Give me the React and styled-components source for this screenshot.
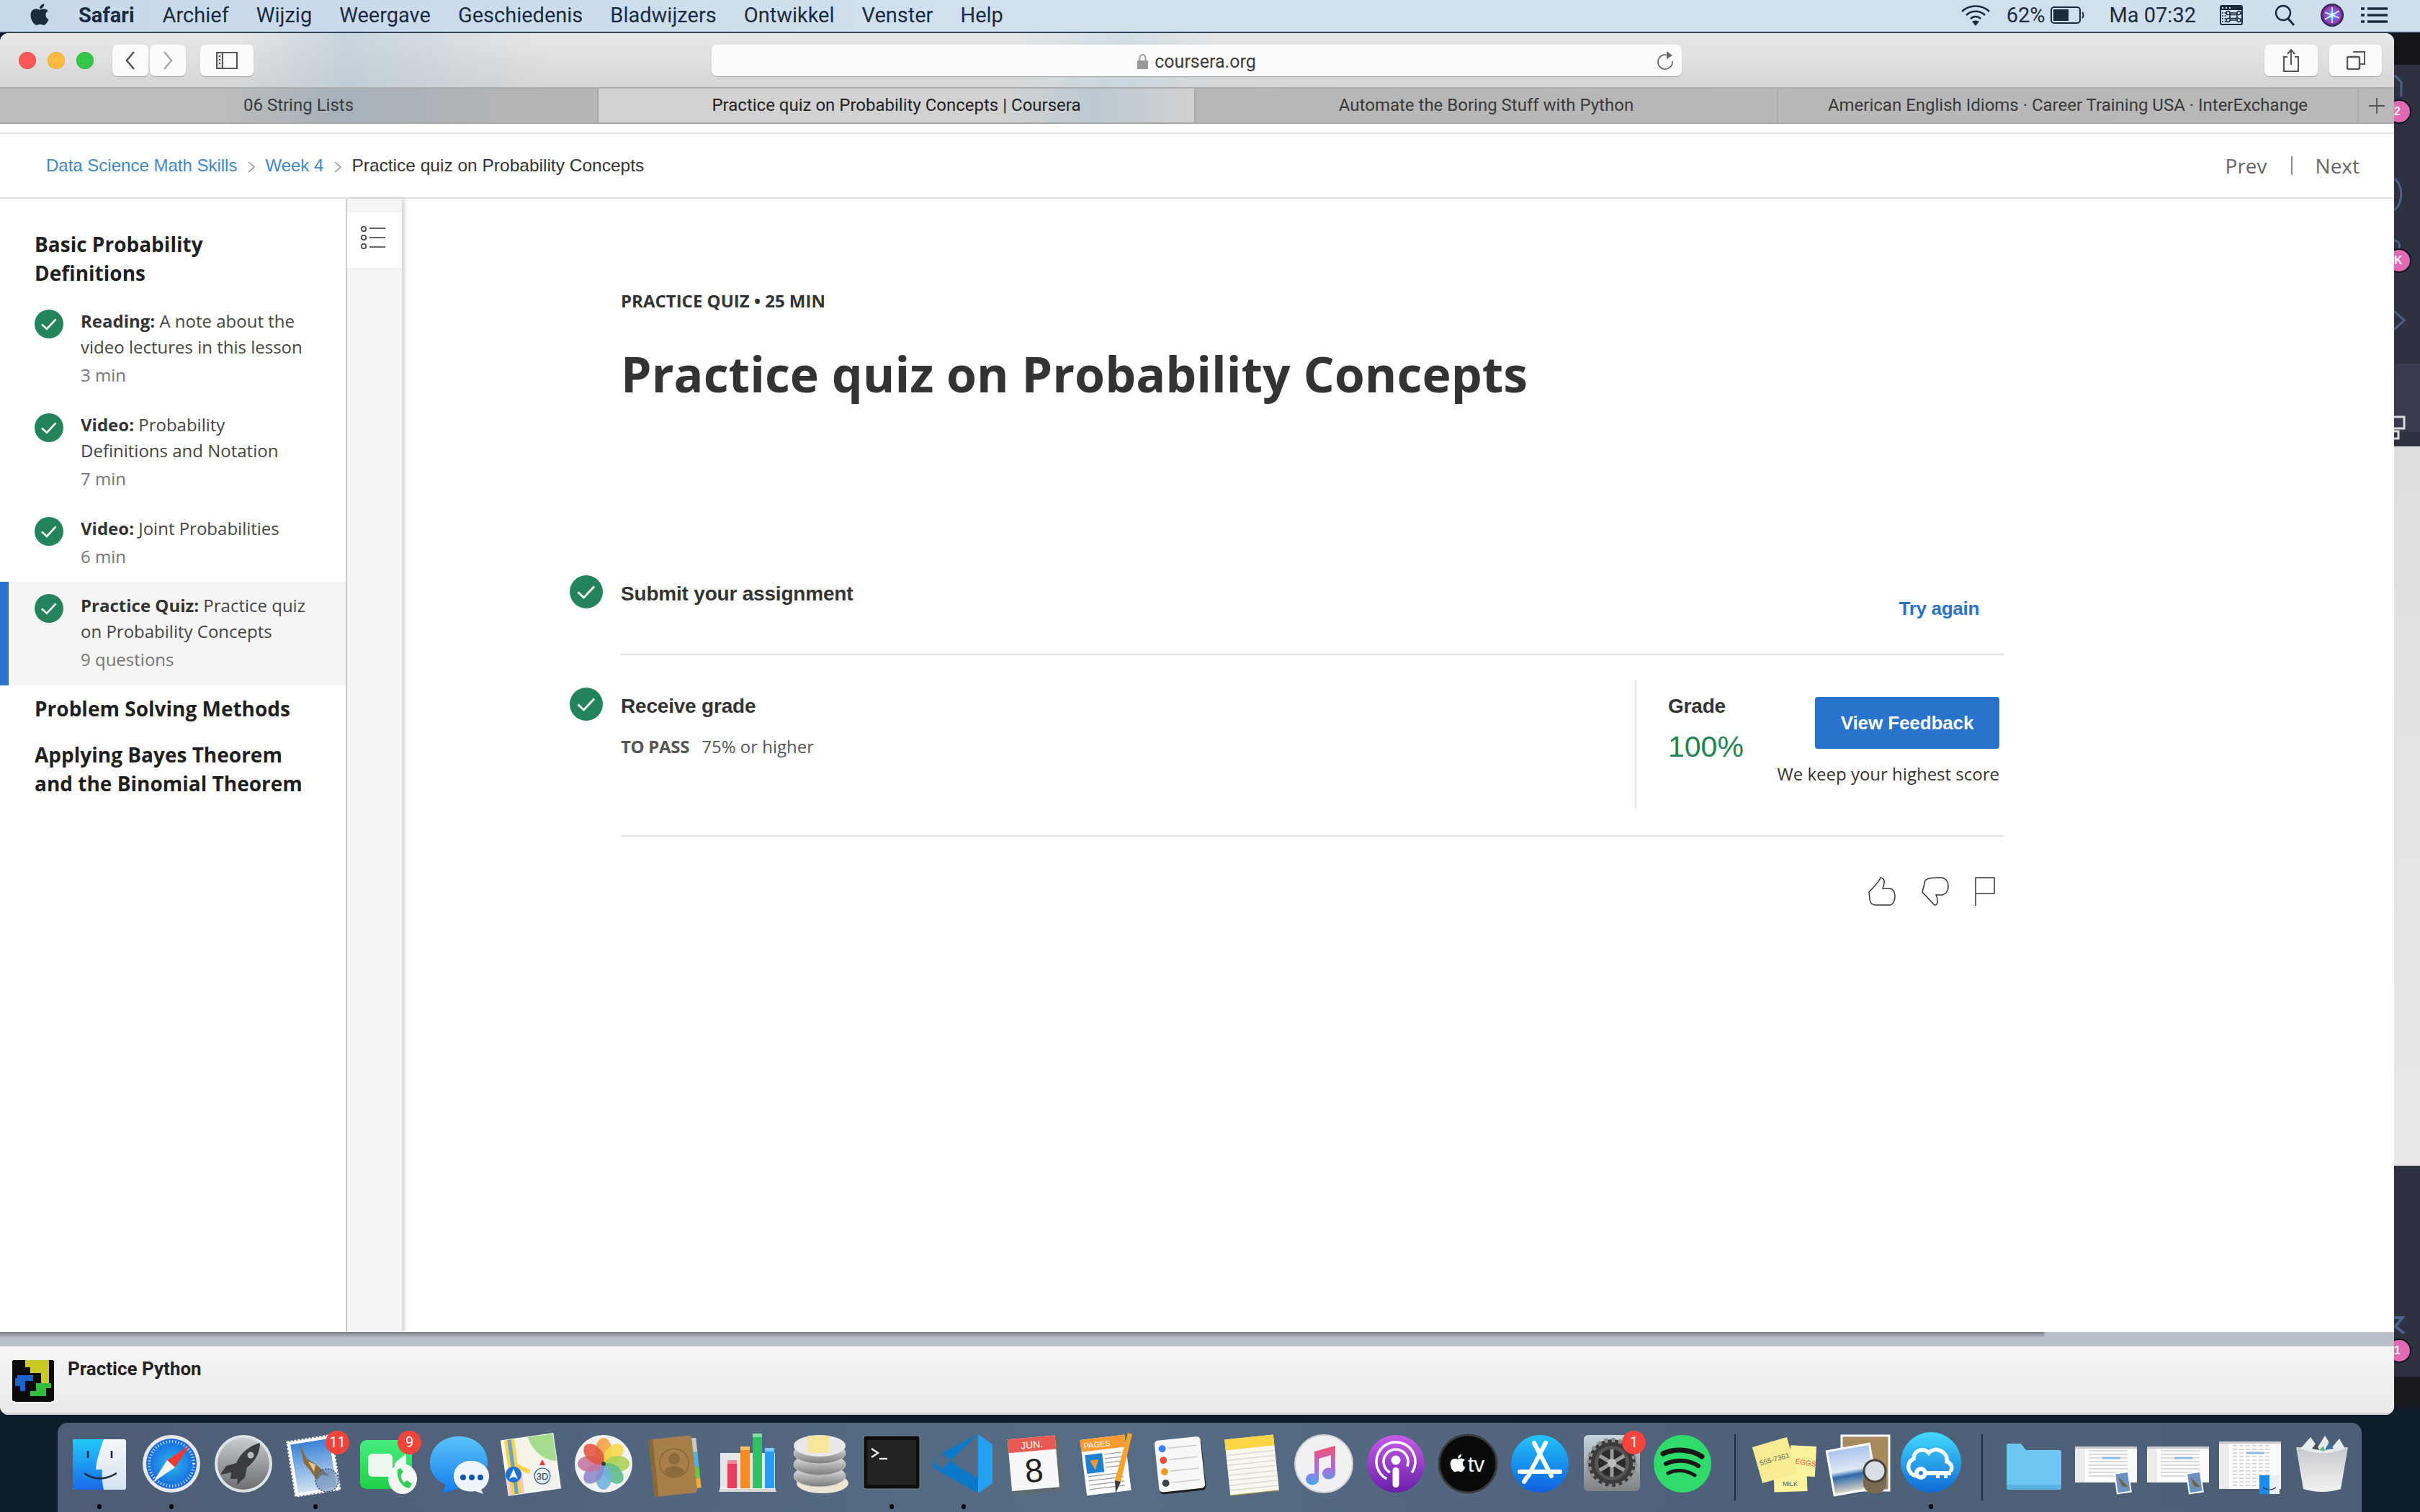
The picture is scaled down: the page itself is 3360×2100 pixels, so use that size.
import React from 'react'
import styled, { createGlobalStyle } from 'styled-components'
import { FaApple } from 'react-icons/fa'

const OPEN = '"Open Sans", "Liberation Sans", sans-serif'
const ARIAL = '"Liberation Sans", Arial, sans-serif'
const CHROME = 'Roboto, "Liberation Sans", sans-serif'

const Global = createGlobalStyle`
  html, body { margin: 0; padding: 0; background: #0f1c2c; }
  * { box-sizing: border-box; }
`

const Desktop = styled.div`
  width: 3360px;
  height: 2100px;
  overflow: hidden;
  display: flex;
  flex-direction: column;
  background: #0f1c2c;
`

/* ---------- menu bar ---------- */
const MenuBar = styled.div`
  height: 46px;
  flex: none;
  display: flex;
  align-items: center;
  padding: 0 45px 2px 42px;
  background: linear-gradient(90deg, #c6d9ea, #d0e0ee 40%, #cfdfed);
  border-bottom: 2px solid #33465c;
  font-family: ${CHROME};
  font-size: 29px;
  color: #1c2b3c;
`
const MenuItem = styled.span`
  margin-left: ${p => p.$ml || 38}px;
  font-weight: ${p => (p.$bold ? 700 : 400)};
  white-space: nowrap;
`
const MenuSpacer = styled.div`
  flex: 1;
`
const TrayIcon = styled.svg`
  margin-left: ${p => p.$ml || 0}px;
  flex: none;
  display: block;
`
const AppleMark = styled(FaApple)`
  width: 32px;
  height: 34px;
  margin: -2px 0 0 -3px;
  flex: none;
`

/* ---------- window ---------- */
const Stage = styled.div`
  height: 1919px;
  flex: none;
  display: flex;
  align-items: flex-start;
`
const Window = styled.div`
  width: 3324px;
  height: 100%;
  flex: none;
  position: relative;
  z-index: 1;
  display: flex;
  flex-direction: column;
  border-radius: 12px;
  overflow: hidden;
  background: #fff;
`
const Toolbar = styled.div`
  height: 75px;
  flex: none;
  display: flex;
  align-items: flex-start;
  padding: 16px 0 0 26px;
  background:
    linear-gradient(90deg, transparent 320px, rgba(175, 198, 214, .55) 480px, transparent 760px, transparent 1400px, rgba(190, 214, 228, .55) 1560px, transparent 1700px),
    linear-gradient(#e8e8e8, #d6d6d6);
`
const Light = styled.span`
  width: 24px;
  height: 24px;
  border-radius: 50%;
  margin: 10px 16px 0 0;
  flex: none;
  background: ${p => p.$c};
  box-shadow: inset 0 0 0 1px rgba(0, 0, 0, .08);
`
const ToolButton = styled.div`
  width: ${p => p.$w}px;
  height: 44px;
  margin-left: ${p => p.$ml || 0}px;
  flex: none;
  display: flex;
  align-items: center;
  justify-content: center;
  background: #fbfbfb;
  border-radius: 7px;
  box-shadow: 0 1px 1px rgba(0, 0, 0, .28);
`
const UrlField = styled(ToolButton)`
  display: grid;
  grid-template-columns: 1fr auto 1fr;
  padding: 0 10px;
  font-family: ${CHROME};
  font-size: 25px;
  color: #3b3b3b;
`
const UrlText = styled.div`
  grid-column: 2;
  display: flex;
  align-items: center;
  gap: 9px;
  padding-top: 2px;
`
const UrlEnd = styled.div`
  justify-self: end;
  display: flex;
`
const TabBar = styled.div`
  height: 51px;
  flex: none;
  display: flex;
  border-top: 2px solid #adadad;
  border-bottom: 2px solid #a8a8a8;
  background:
    linear-gradient(90deg, #bdbdbd 300px, #a6b1ba 480px, #b6b6b6 740px, #b9b9b9 100%);
  font-family: ${CHROME};
  font-size: 24px;
  color: #3a3a3a;
`
const Tab = styled.div`
  width: ${p => p.$w}px;
  flex: none;
  display: flex;
  align-items: center;
  justify-content: center;
  white-space: nowrap;
  padding-bottom: 1px;
  border-right: 2px solid #a9a9a9;
  ${p => p.$active && `
    color: #222;
    background: linear-gradient(90deg, #d2d2d2, #d2d2d2 68%, #bccad3 83%, #d0d0d0 100%);
  `}
`
const NewTab = styled.div`
  flex: 1;
  display: flex;
  align-items: center;
  justify-content: center;
`

/* ---------- course nav ---------- */
const CrumbBar = styled.div`
  margin-top: 12px;
  height: 92px;
  flex: none;
  display: flex;
  align-items: center;
  justify-content: space-between;
  padding: 0 48px 0 64px;
  border-top: 2px solid #e2e2e2;
  border-bottom: 2px solid #e2e2e2;
`
const Crumbs = styled.div`
  display: flex;
  align-items: center;
  font-family: ${ARIAL};
  font-size: 24px;
  color: #333;
  padding-bottom: 1px;
`
const CrumbLink = styled.span`
  color: #3f88c9;
`
const CrumbCurrent = styled.span`
  font-size: 24.5px;
`
const CrumbChevron = styled.svg`
  margin: 4px 14px 0 15px;
  flex: none;
`
const Pager = styled.div`
  display: flex;
  align-items: center;
  font-family: ${OPEN};
  font-size: 28px;
  color: #666;
`
const PagerBar = styled.span`
  width: 2px;
  height: 26px;
  margin: 0 32px 0 33px;
  background: #8a8a8a;
`

/* ---------- body ---------- */
const CourseBody = styled.div`
  flex: 1;
  min-height: 0;
  display: flex;
`
const Sidebar = styled.div`
  width: 480px;
  flex: none;
  padding-top: 43px;
  font-family: ${OPEN};
`
const WeekHeading = styled.div`
  padding-left: 48px;
  margin-top: ${p => p.$mt || 0}px;
  font-size: 28px;
  line-height: 40px;
  font-weight: 700;
  color: #1f1f1f;
  white-space: nowrap;
`
const Lessons = styled.div`
  margin-top: 14px;
`
const Lesson = styled.div`
  display: flex;
  gap: 24px;
  padding: 15px 0 ${p => p.$pb || 18}px ${p => (p.$active ? 36 : 48)}px;
  background: ${p => (p.$active ? '#f5f5f5' : 'transparent')};
  border-left: ${p => (p.$active ? '12px solid #2a73cc' : 'none')};
`
const LessonCheck = styled.div`
  padding-top: 2px;
  flex: none;
`
const LessonText = styled.div`
  font-size: 24px;
  line-height: 36px;
  color: #444;
  white-space: nowrap;
  b { color: #333; font-weight: 700; }
`
const LessonMeta = styled.div`
  margin-top: 3px;
  color: #757575;
`
const Rail = styled.div`
  width: 78px;
  flex: none;
  padding-top: 19px;
  background: #f5f5f5;
  border-left: 2px solid #cdcdcd;
  box-shadow: 4px 0 5px rgba(0, 0, 0, .17);
`
const RailToggle = styled.div`
  height: 77px;
  display: flex;
  align-items: center;
  justify-content: center;
  background: #fff;
  padding: 0 5px 7px 0;
`
const Main = styled.div`
  flex: 1;
  min-width: 0;
  padding-top: 126px;
`
const Header = styled.div`
  padding-left: 304px;
`
const Eyebrow = styled.div`
  font-family: ${OPEN};
  font-size: 24px;
  line-height: 32px;
  font-weight: 700;
  color: #333;
`
const Title = styled.h1`
  margin: 45px 0 0;
  font-family: ${OPEN};
  font-size: 68px;
  line-height: 80px;
  font-weight: 700;
  color: #333;
  white-space: nowrap;
`
const Steps = styled.div`
  margin: 240px 0 0 233px;
  width: 1991px;
`
const Step = styled.div`
  display: flex;
  gap: 25px;
`
const StepCheck = styled.div`
  flex: none;
  padding-top: ${p => p.$pt || 0}px;
`
const StepBody = styled.div`
  flex: 1;
  min-width: 0;
  display: flex;
  justify-content: space-between;
  height: ${p => p.$h}px;
  padding-top: ${p => p.$pt || 0}px;
  border-bottom: 2px solid #e2e2e2;
`
const StepLabel = styled.div`
  font-family: ${ARIAL};
  font-size: 28px;
  line-height: 40px;
  font-weight: 700;
  color: #333;
  margin-top: ${p => p.$mt || 0}px;
  letter-spacing: -0.2px;
`
const TryAgain = styled.a`
  font-family: ${ARIAL};
  font-size: 26px;
  line-height: 40px;
  font-weight: 700;
  color: #2a73cc;
  margin: 20px 34px 0 0;
  letter-spacing: -0.3px;
`
const PassLine = styled.div`
  margin-top: 19px;
  font-family: ${OPEN};
  font-size: 24px;
  line-height: 34px;
  color: #555;
  white-space: nowrap;
  b { font-weight: 700; margin-right: 17px; letter-spacing: -0.3px; }
`
const GradePanel = styled.div`
  width: 512px;
  height: 179px;
  flex: none;
  display: flex;
  justify-content: space-between;
  padding: 0 6px 0 44px;
  border-left: 2px solid #e2e2e2;
`
const GradeValue = styled.div`
  margin-top: 11px;
  font-family: ${ARIAL};
  font-size: 41px;
  line-height: 50px;
  color: #1f8354;
`
const GradeAction = styled.div`
  display: flex;
  flex-direction: column;
  align-items: flex-end;
  padding-top: 24px;
`
const FeedbackButton = styled.button`
  width: 256px;
  height: 72px;
  border: 0;
  border-radius: 4px;
  background: #2a73cc;
  color: #fff;
  font-family: ${ARIAL};
  font-size: 26px;
  font-weight: 700;
  letter-spacing: -0.1px;
`
const KeepNote = styled.div`
  margin-top: 18px;
  font-family: ${OPEN};
  font-size: 24px;
  line-height: 34px;
  color: #333;
  white-space: nowrap;
`
const Reactions = styled.div`
  margin-top: 56px;
  display: flex;
  justify-content: flex-end;
  gap: 36px;
  padding-right: 12px;
`

/* ---------- bottom of window ---------- */
const ShadowStrip = styled.div`
  height: 20px;
  flex: none;
  background:
    linear-gradient(rgba(0, 0, 0, .34), transparent) 0 0 / 2838px 8px no-repeat,
    #b9bfc9;
`
const StatusBar = styled.div`
  height: 95px;
  flex: none;
  display: flex;
  align-items: flex-start;
  gap: 19px;
  padding: 18px 0 0 17px;
  background: linear-gradient(#f6f6f6, #e9e9e9);
  border-bottom: 3px solid #d8d8d8;
  font-family: ${CHROME};
  font-size: 26px;
  font-weight: 700;
  color: #232323;
`
const StatusTitle = styled.div`
  margin-top: -4px;
  line-height: 34px;
`

/* ---------- what lies behind the window on the right ---------- */
const BackStrip = styled.div`
  position: relative;
  width: 36px;
  height: 1911px;
  flex: none;
  display: flex;
  flex-direction: column;
`
const BackBlock = styled.div`
  flex: ${p => (p.$h ? 'none' : 1)};
  height: ${p => p.$h}px;
  background: ${p => p.$c};
  border-radius: ${p => p.$r || 0};
`
const Pin = styled.div`
  position: absolute;
  left: -8px;
  top: ${p => p.$top}px;
  width: 30px;
  height: 30px;
  padding-left: 8px;
  border-radius: 50%;
  background: #e16ab4;
  box-shadow: 0 0 0 2px #15161b;
  color: #f3f3f3;
  font-family: ${ARIAL};
  font-size: 16px;
  line-height: 30px;
  font-weight: 700;
`
const Ghost = styled.svg`
  position: absolute;
  left: 0;
  top: ${p => p.$top}px;
`

/* ---------- dock ---------- */
const Dock = styled.div`
  margin: 11px 0 0 80px;
  width: 3199px;
  height: 124px;
  flex: none;
  display: flex;
  padding-left: 8px;
  border-radius: 14px 14px 0 0;
  background: linear-gradient(90deg, #4d5d76, #566c85 45%, #4f6079 75%, #4d5e77);
`
const Slot = styled.div`
  position: relative;
  width: 100px;
  height: 124px;
  flex: none;
  padding-top: 12px;
  svg { display: block; }
`
const RunDot = styled.div`
  width: 6px;
  height: 7px;
  margin: 5px auto 0;
  border-radius: 50%;
  background: #050505;
`
const Badge = styled.div`
  position: absolute;
  top: 11px;
  right: 3px;
  width: 33px;
  height: 33px;
  border-radius: 50%;
  background: #f0443c;
  color: #fff;
  font-family: ${CHROME};
  font-size: 20px;
  line-height: 33px;
  text-align: center;
`
const DockRule = styled.div`
  width: 2px;
  height: 92px;
  margin: 16px 21px 0 20px;
  flex: none;
  background: #1c2f47;
`

/* ---------- small drawings ---------- */
const Check = ({ size }) => (
  <svg width={size} height={size} viewBox="0 0 46 46">
    <circle cx="23" cy="23" r="23" fill="#23835a" />
    <path d="M11.5 23.5 L19.5 31 L34 15.5" fill="none" stroke="#fff" strokeWidth="3" />
  </svg>
)
const Chev = () => (
  <CrumbChevron width="10" height="16" viewBox="0 0 10 16">
    <path d="M1 1 L9 8 L1 15" fill="none" stroke="#888" strokeWidth="1.3" />
  </CrumbChevron>
)

const Finder = () => (
  <svg width="100" height="96" viewBox="0 0 100 96">
    <defs>
      <linearGradient id="fd1" x1="0" y1="0" x2="0" y2="1"><stop offset="0" stopColor="#22c8fb" /><stop offset="1" stopColor="#1a6ae8" /></linearGradient>
      <linearGradient id="fd2" x1="0" y1="0" x2="0" y2="1"><stop offset="0" stopColor="#f4f6f8" /><stop offset="1" stopColor="#d5e4f1" /></linearGradient>
    </defs>
    <rect x="13" y="11" width="74" height="70" rx="3" fill="url(#fd2)" />
    <path d="M16 11 H56 C50 28 46 40 45 53 H54 C53 62 54 72 56 81 H16 a3 3 0 0 1 -3 -3 V14 a3 3 0 0 1 3 -3 Z" fill="url(#fd1)" />
    <path d="M34 27 V37 M67 27 V37" stroke="#1c2a3e" strokeWidth="2.6" />
    <path d="M29 58 Q50 73 74 58" fill="none" stroke="#1c2a3e" strokeWidth="2.6" />
  </svg>
)
const Safari = () => (
  <svg width="100" height="96" viewBox="0 0 100 96">
    <defs>
      <radialGradient id="sf1"><stop offset="0" stopColor="#2bb8f2" /><stop offset="1" stopColor="#1766de" /></radialGradient>
    </defs>
    <circle cx="50" cy="45" r="40" fill="#e8e8e8" />
    <circle cx="50" cy="45" r="35" fill="url(#sf1)" />
    <circle cx="50" cy="45" r="31" fill="none" stroke="#d9ecfb" strokeWidth="4" strokeDasharray="1.2 3" />
    <polygon points="76,19 44,40 55,50" fill="#f03a33" />
    <polygon points="24,71 44,40 55,50" fill="#f4f4f4" />
  </svg>
)
const Launchpad = () => (
  <svg width="100" height="96" viewBox="0 0 100 96">
    <defs>
      <linearGradient id="lp1" x1="0" y1="0" x2="0" y2="1"><stop offset="0" stopColor="#c7cdd0" /><stop offset="1" stopColor="#6c6e70" /></linearGradient>
    </defs>
    <circle cx="50" cy="45" r="40" fill="#dfe3e5" />
    <circle cx="50" cy="45" r="36" fill="url(#lp1)" />
    <path d="M73 16 C58 20 46 30 40 44 L26 48 L18 60 L33 57 L32 66 L42 66 L41 74 L52 64 L55 50 C66 42 73 30 73 16 Z" fill="#3a3c3f" />
    <circle cx="60" cy="33" r="4.5" fill="#b7bcbf" />
  </svg>
)
const Mail = () => (
  <svg width="100" height="96" viewBox="0 0 100 96">
    <defs>
      <linearGradient id="ml1" x1="0" y1="0" x2="0" y2="1"><stop offset="0" stopColor="#3b82d6" /><stop offset="1" stopColor="#cfe2f2" /></linearGradient>
    </defs>
    <g transform="rotate(-9 46 46)">
      <rect x="16" y="10" width="62" height="76" fill="#fff" stroke="#fff" strokeWidth="3" strokeDasharray="3 2" />
      <rect x="20" y="14" width="54" height="68" fill="url(#ml1)" />
    </g>
    <path d="M28 18 L38 38 L48 44 L70 62 L58 60 L52 68 L44 56 L34 44 Z" fill="#8d6a3c" />
    <path d="M40 42 L50 46 L48 56 Z" fill="#e3c998" />
    <circle cx="66" cy="68" r="16" fill="#5a7ca8" fillOpacity=".55" stroke="#3d5473" strokeWidth="1.5" strokeDasharray="2 2" />
  </svg>
)
const FaceTime = () => (
  <svg width="100" height="96" viewBox="0 0 100 96">
    <defs>
      <linearGradient id="ft1" x1="0" y1="0" x2="0" y2="1"><stop offset="0" stopColor="#46ee7f" /><stop offset="1" stopColor="#1fd045" /></linearGradient>
    </defs>
    <rect x="12" y="12" width="72" height="68" rx="9" fill="url(#ft1)" />
    <rect x="23" y="31" width="34" height="32" rx="6" fill="#edf7ee" />
    <path d="M60 44 L76 31 V62 L60 52 Z" fill="#edf7ee" />
    <ellipse cx="71" cy="66" rx="20" ry="21" fill="#f4f6f2" />
    <path d="M64 53 C62 63 68 77 80 79 L84 73 L77 68 L73 71 C70 68 68 63 69 60 L72 56 L68 51 Z" fill="#2fd158" />
  </svg>
)
const Messages = () => (
  <svg width="100" height="96" viewBox="0 0 100 96">
    <defs>
      <linearGradient id="ms1" x1="0" y1="0" x2="0" y2="1"><stop offset="0" stopColor="#5bc3fb" /><stop offset="1" stopColor="#117ef0" /></linearGradient>
    </defs>
    <path d="M49 7 C72 7 89 22 89 44 C89 66 72 79 49 79 L26 86 L31 74 C17 68 9 57 9 44 C9 22 26 7 49 7 Z" fill="url(#ms1)" />
    <path d="M66 41 C81 41 91 51 91 62 C91 73 84 79 80 81 L83 87 L72 83 C54 86 42 76 42 62 C42 50 52 41 66 41 Z" fill="#eef4fa" />
    <circle cx="55" cy="64" r="4" fill="#1558a6" /><circle cx="67" cy="64" r="4" fill="#1558a6" /><circle cx="79" cy="64" r="4" fill="#1558a6" />
  </svg>
)
const Maps = () => (
  <svg width="100" height="96" viewBox="0 0 100 96">
    <g transform="rotate(-8 48 46)">
      <rect x="13" y="8" width="72" height="76" fill="#f5f3e8" stroke="#fff" strokeWidth="2" />
      <path d="M50 8 H85 V46 C68 44 54 28 50 8 Z" fill="#a5dc8d" />
      <rect x="13" y="54" width="22" height="30" fill="#f5c8d2" />
      <path d="M20 8 V84 M28 8 V84" stroke="#fbd445" strokeWidth="6" />
      <path d="M24 8 V84" stroke="#6a9fd8" strokeWidth="5" />
      <path d="M30 46 L70 72" stroke="#fbd445" strokeWidth="6" />
    </g>
    <circle cx="25" cy="60" r="11" fill="#1a74d0" />
    <polygon points="25,52 31,66 25,63 19,66" fill="#fff" />
    <circle cx="65" cy="62" r="19" fill="#f2f2f2" />
    <circle cx="65" cy="62" r="11" fill="#e3edf2" stroke="#2f5f78" strokeWidth="1.2" />
    <text x="65" y="67" textAnchor="middle" fontFamily={ARIAL} fontSize="13" fill="#333">3D</text>
    <polygon points="65,39 61,47 69,47" fill="#e5383b" />
  </svg>
)
const Photos = () => {
  const colors = ['#f7a23b', '#f6d94a', '#a9cf54', '#5dbb8a', '#6cb2e0', '#8d87c8', '#c474a0', '#e2543f']
  return (
    <svg width="100" height="96" viewBox="0 0 100 96">
      <circle cx="50" cy="45" r="40" fill="#f2f2f2" />
      {colors.map((c, i) => (
        <ellipse key={c} cx="50" cy="26" rx="11" ry="17" fill={c} fillOpacity=".88" transform={`rotate(${i * 45} 50 45)`} />
      ))}
      <circle cx="50" cy="45" r="3" fill="#3a3a3a" />
    </svg>
  )
}
const Contacts = () => (
  <svg width="100" height="96" viewBox="0 0 100 96">
    <g transform="rotate(-6 48 46)">
      <rect x="74" y="12" width="8" height="20" fill="#c9c9c9" />
      <rect x="74" y="32" width="8" height="20" fill="#56b0dc" />
      <rect x="74" y="52" width="8" height="16" fill="#6cc24a" />
      <rect x="74" y="68" width="8" height="14" fill="#e9b13b" />
      <rect x="16" y="8" width="60" height="80" rx="4" fill="#a77f4b" />
      <rect x="16" y="8" width="6" height="80" fill="#8b6838" />
    </g>
    <circle cx="48" cy="44" r="20" fill="none" stroke="#8d6a3c" strokeWidth="2" />
    <circle cx="48" cy="38" r="8" fill="#8d6a3c" />
    <path d="M34 56 C38 46 58 46 62 56 C56 65 40 65 34 56 Z" fill="#8d6a3c" />
  </svg>
)
const Numbers = () => (
  <svg width="100" height="96" viewBox="0 0 100 96">
    <path d="M10 84 L12 78 H88 L90 84 Z" fill="#d9d9d9" />
    <rect x="12" y="30" width="76" height="50" fill="#f4f4f4" opacity=".9" />
    <rect x="22" y="44" width="13" height="35" fill="#e8405a" /><rect x="22" y="40" width="13" height="5" fill="#f48a98" />
    <rect x="40" y="25" width="13" height="54" fill="#f78a24" /><rect x="40" y="21" width="13" height="5" fill="#fbc06a" />
    <rect x="57" y="7" width="13" height="72" fill="#2fc062" /><rect x="57" y="3" width="13" height="5" fill="#7fdf9b" />
    <rect x="74" y="27" width="13" height="52" fill="#2a9cf0" /><rect x="74" y="23" width="13" height="5" fill="#7fcaf8" />
  </svg>
)
const SequelPro = () => (
  <svg width="100" height="96" viewBox="0 0 100 96">
    <defs>
      <linearGradient id="sq1" x1="0" y1="0" x2="0" y2="1"><stop offset="0" stopColor="#f2f2f2" /><stop offset="1" stopColor="#7a7a7a" /></linearGradient>
    </defs>
    <ellipse cx="54" cy="72" rx="36" ry="14" fill="#ede6d2" />
    {[62, 46, 30].map(y => <ellipse key={y} cx="50" cy={y} rx="36" ry="15" fill="url(#sq1)" stroke="#c9c9c9" />)}
    <ellipse cx="50" cy="20" rx="36" ry="15" fill="#e9e9e9" />
    <rect x="33" y="6" width="30" height="24" rx="2" fill="#f6e79a" />
  </svg>
)
const Terminal = () => (
  <svg width="100" height="96" viewBox="0 0 100 96">
    <rect x="11" y="6" width="78" height="74" rx="3" fill="#0e0e0e" stroke="#7d8a90" strokeWidth="1" />
    <rect x="16" y="12" width="68" height="62" fill="#232323" />
    <path d="M22 24 L31 30 L22 36" fill="none" stroke="#f0f0f0" strokeWidth="2.4" />
    <path d="M33 38 H44" stroke="#f0f0f0" strokeWidth="2.4" />
  </svg>
)
const VSCode = () => (
  <svg width="100" height="96" viewBox="0 0 100 96">
    <path d="M70 4 L20 52 L8 42 L20 30 Z M20 30 L8 40 V50 L20 58 L70 86 V66 L36 44 Z" fill="#0c79c8" />
    <path d="M70 4 L90 18 V72 L70 86 Z" fill="#23a0f0" />
  </svg>
)
const Calendar = () => (
  <svg width="100" height="96" viewBox="0 0 100 96">
    <g transform="rotate(-5 50 46)">
      <rect x="18" y="10" width="68" height="76" fill="#5f6b72" />
      <rect x="14" y="8" width="66" height="72" fill="#f8f8f8" />
      <rect x="14" y="8" width="66" height="19" fill="#e85a54" />
      <text x="47" y="23" textAnchor="middle" fontFamily={ARIAL} fontSize="14" fill="#fff">JUN.</text>
      <text x="47" y="70" textAnchor="middle" fontFamily={ARIAL} fontSize="46" fill="#222">8</text>
    </g>
  </svg>
)
const Pages = () => (
  <svg width="100" height="96" viewBox="0 0 100 96">
    <g transform="rotate(-7 46 46)">
      <rect x="16" y="8" width="62" height="78" fill="#fcfcfc" />
      <rect x="16" y="8" width="62" height="17" fill="#f79a30" />
      <text x="20" y="21" fontFamily={ARIAL} fontSize="11" fill="#fff">PAGES</text>
      <rect x="20" y="30" width="24" height="26" fill="#1c7fd0" />
      <path d="M32 52 L26 38 H38 Z" fill="#f59a2a" />
      {[32, 38, 44, 50, 60, 66, 72, 78].map(y => (
        <path key={y} d={`M${y < 56 ? 47 : 21} ${y} H70`} stroke="#9a9a9a" strokeWidth="1.2" />
      ))}
    </g>
    <path d="M78 2 L84 4 L68 70 L60 68 Z" fill="#f7a228" />
    <path d="M60 68 L68 70 L61 86 Z" fill="#3b3b3b" />
  </svg>
)
const Reminders = () => (
  <svg width="100" height="96" viewBox="0 0 100 96">
    <g transform="rotate(-6 48 46)">
      <rect x="18" y="10" width="64" height="72" rx="5" fill="#1e1e1e" transform="translate(1 3)" />
      <rect x="18" y="10" width="64" height="72" rx="5" fill="#f7f7f7" />
      {[['#3f7ef5', 22], ['#ee4b3e', 38], ['#f0982e', 54], ['#3e444c', 70]].map(([c, y]) => (
        <g key={c}>
          <circle cx="28" cy={y} r="5" fill={c} />
          <path d={`M36 ${y} H76`} stroke="#c9c9c9" strokeWidth="1.4" />
        </g>
      ))}
    </g>
  </svg>
)
const Notes = () => (
  <svg width="100" height="96" viewBox="0 0 100 96">
    <g transform="rotate(-6 48 46)">
      <rect x="16" y="8" width="68" height="78" fill="#f9f7ee" />
      <rect x="16" y="8" width="68" height="15" fill="#fbd545" />
      {[30, 37, 44, 51, 58, 65, 72, 79].map(y => <path key={y} d={`M16 ${y} H84`} stroke="#dcdad0" strokeWidth="1.5" />)}
      <path d="M16 86 H84" stroke="#a08a4a" strokeWidth="1.5" />
    </g>
  </svg>
)
const Music = () => (
  <svg width="100" height="96" viewBox="0 0 100 96">
    <defs>
      <linearGradient id="mu1" x1="0" y1="0" x2="0" y2="1"><stop offset="0" stopColor="#f2506e" /><stop offset=".6" stopColor="#a86fe0" /><stop offset="1" stopColor="#4aa8f0" /></linearGradient>
    </defs>
    <circle cx="50" cy="45" r="40" fill="#f0f0f3" stroke="#d2d2d6" strokeWidth="2" />
    <path d="M37 28 L66 20 V58 a9 8 0 1 1 -6 -7 V33 L43 38 V66 a9 8 0 1 1 -6 -7 Z" fill="url(#mu1)" />
  </svg>
)
const Podcasts = () => (
  <svg width="100" height="96" viewBox="0 0 100 96">
    <defs>
      <linearGradient id="pd1" x1="0" y1="0" x2="0" y2="1"><stop offset="0" stopColor="#c65de8" /><stop offset="1" stopColor="#6a1fa8" /></linearGradient>
    </defs>
    <circle cx="50" cy="45" r="40" fill="url(#pd1)" />
    <circle cx="50" cy="42" r="27" fill="none" stroke="#fff" strokeWidth="3.5" strokeDasharray="130 40" transform="rotate(118 50 42)" />
    <circle cx="50" cy="42" r="17" fill="none" stroke="#fff" strokeWidth="3.5" strokeDasharray="78 30" transform="rotate(118 50 42)" />
    <circle cx="50" cy="40" r="6.5" fill="#fff" />
    <rect x="45.5" y="50" width="9" height="28" rx="4.5" fill="#fff" />
  </svg>
)
const AppleTv = () => (
  <svg width="100" height="96" viewBox="0 0 100 96">
    <circle cx="50" cy="45" r="40" fill="#0a0a0a" stroke="#3a3a3a" strokeWidth="3" />
    <FaApple x="22" y="30" size="28" color="#fff" />
    <text x="50" y="56" fontFamily={ARIAL} fontSize="30" fill="#fff">tv</text>
  </svg>
)
const AppStore = () => (
  <svg width="100" height="96" viewBox="0 0 100 96">
    <defs>
      <linearGradient id="as1" x1="0" y1="0" x2="0" y2="1"><stop offset="0" stopColor="#22c4fa" /><stop offset="1" stopColor="#0f5fe0" /></linearGradient>
    </defs>
    <circle cx="50" cy="45" r="40" fill="url(#as1)" />
    <path d="M58 16 L34 62 M42 16 L66 62" stroke="#fff" strokeWidth="6" strokeLinecap="round" />
    <path d="M22 56 H78" stroke="#fff" strokeWidth="6" strokeLinecap="round" />
    <path d="M32 64 L28 70" stroke="#fff" strokeWidth="6" strokeLinecap="round" />
  </svg>
)
const SysPrefs = () => (
  <svg width="100" height="96" viewBox="0 0 100 96">
    <defs>
      <linearGradient id="sp1" x1="0" y1="0" x2="0" y2="1"><stop offset="0" stopColor="#c5d5dc" /><stop offset="1" stopColor="#808283" /></linearGradient>
    </defs>
    <rect x="11" y="5" width="78" height="78" rx="6" fill="url(#sp1)" />
    <circle cx="50" cy="44" r="33" fill="#3a3a3a" />
    <circle cx="50" cy="44" r="32" fill="none" stroke="#8a8a8a" strokeWidth="6" strokeDasharray="5 5" />
    <circle cx="50" cy="44" r="24" fill="#555" />
    <circle cx="50" cy="44" r="19" fill="#2a2a2a" />
    <path d="M50 25 V63 M33 34 L67 54 M67 34 L33 54" stroke="#9a9a9a" strokeWidth="5" />
    <circle cx="50" cy="44" r="6" fill="#bdbdbd" />
  </svg>
)
const Spotify = () => (
  <svg width="100" height="96" viewBox="0 0 100 96">
    <circle cx="48" cy="45" r="40" fill="#2edb6b" />
    <path d="M21 31 C38 23 60 25 75 35" fill="none" stroke="#181818" strokeWidth="7" strokeLinecap="round" />
    <path d="M25 45 C40 38 58 40 70 48" fill="none" stroke="#181818" strokeWidth="6" strokeLinecap="round" />
    <path d="M28 58 C40 52 54 54 65 61" fill="none" stroke="#181818" strokeWidth="5" strokeLinecap="round" />
  </svg>
)
const Stickies = () => (
  <svg width="100" height="96" viewBox="0 0 100 96">
    <rect x="32" y="60" width="46" height="24" fill="#fdf39a" transform="rotate(-2 50 70)" />
    <rect x="54" y="20" width="36" height="42" fill="#fdf39a" transform="rotate(3 70 40)" />
    <rect x="8" y="14" width="50" height="52" fill="#f8ec92" transform="rotate(-16 33 40)" />
    <text x="12" y="42" fontFamily={ARIAL} fontSize="10" fill="#666" transform="rotate(-16 33 40)">555-7361</text>
    <text x="62" y="46" fontFamily={ARIAL} fontSize="10" fill="#ee4a3a" transform="rotate(8 70 40)">EGGS</text>
    <text x="44" y="76" fontFamily={ARIAL} fontSize="9" fill="#44588a">MILK</text>
  </svg>
)
const Preview = () => (
  <svg width="100" height="96" viewBox="0 0 100 96">
    <defs>
      <linearGradient id="pv1" x1="0" y1="0" x2="0" y2="1"><stop offset="0" stopColor="#a8c4ec" /><stop offset=".5" stopColor="#dfe8f4" /><stop offset=".62" stopColor="#2d66a8" /><stop offset="1" stopColor="#e6dcc8" /></linearGradient>
    </defs>
    <rect x="26" y="6" width="66" height="76" fill="#a8895e" stroke="#fff" strokeWidth="3" />
    <rect x="10" y="22" width="60" height="62" fill="url(#pv1)" stroke="#fff" strokeWidth="3" transform="rotate(-10 40 52)" />
    <rect x="56" y="50" width="32" height="36" rx="14" fill="#7b6a52" />
    <circle cx="72" cy="55" r="15" fill="#d8dee6" stroke="#4a4238" strokeWidth="3" />
  </svg>
)
const CloudKey = () => (
  <svg width="100" height="96" viewBox="0 0 100 96">
    <defs>
      <linearGradient id="ck1" x1="0" y1="0" x2="0" y2="1"><stop offset="0" stopColor="#43daff" /><stop offset="1" stopColor="#0f6ad4" /></linearGradient>
    </defs>
    <circle cx="50" cy="43" r="42" fill="url(#ck1)" />
    <path d="M30 62 C18 60 14 44 26 38 C26 26 40 22 47 30 C56 20 74 28 72 42 C78 44 80 50 78 54" fill="none" stroke="#fff" strokeWidth="5.5" strokeLinecap="round" />
    <circle cx="36" cy="58" r="9" fill="#fff" /><circle cx="36" cy="58" r="3" fill="#1f86e0" />
    <path d="M44 55 H78 V61 H73 V65 H68 V61 H62 V65 H57 V61 H44 Z" fill="#fff" />
  </svg>
)
const Folder = () => (
  <svg width="100" height="96" viewBox="0 0 100 96">
    <path d="M12 20 a3 3 0 0 1 3 -3 H32 L39 26 H85 a3 3 0 0 1 3 3 V78 a3 3 0 0 1 -3 3 H15 a3 3 0 0 1 -3 -3 Z" fill="#6ec6f2" />
    <path d="M12 74 H88 V78 a3 3 0 0 1 -3 3 H15 a3 3 0 0 1 -3 -3 Z" fill="#58b2e2" />
  </svg>
)
const DocThumb = ({ tall }) => {
  const top = tall ? 14 : 21
  const bottom = tall ? 80 : 71
  const rows = []
  for (let y = top + 6; y < bottom - 4; y += 5) rows.push(y)
  return (
    <svg width="100" height="96" viewBox="0 0 100 96">
      <rect x="7" y={top} width="86" height={bottom - top} fill="#fbfbfb" />
      <rect x="7" y={top} width="86" height="3" fill="#c9c9c9" />
      <rect x="7" y={top + 3} width="14" height={bottom - top - 3} fill="#ececec" />
      {rows.map(y => <path key={y} d={`M26 ${y} H80`} stroke="#b9b9b9" strokeWidth="1.2" strokeDasharray={tall ? '6 3' : '0'} />)}
      <path d={`M45 ${top + 16} H70`} stroke="#8ab8e8" strokeWidth="3" />
      {tall ? (
        <g>
          <rect x="63" y="61" width="14" height="26" fill="#1a8cf0" />
          <rect x="77" y="61" width="14" height="26" fill="#e9eff5" />
          <path d="M68 78 Q77 84 86 78" fill="none" stroke="#1c2a3e" strokeWidth="1.2" />
        </g>
      ) : (
        <g transform="rotate(-8 74 72)">
          <rect x="63" y="56" width="21" height="30" fill="#fff" />
          <rect x="65" y="58" width="17" height="26" fill="#6b93c2" />
          <path d="M68 62 L80 78 L72 76 Z" fill="#7c5e33" />
        </g>
      )}
    </svg>
  )
}
const Trash = () => (
  <svg width="100" height="96" viewBox="0 0 100 96">
    <defs>
      <linearGradient id="tr1" x1="0" y1="0" x2="0" y2="1"><stop offset="0" stopColor="#c6c9cc" /><stop offset="1" stopColor="#f2f3f3" /></linearGradient>
    </defs>
    <path d="M14 22 L24 80 Q50 88 76 80 L86 22 Z" fill="url(#tr1)" />
    <path d="M20 24 L34 8 L44 22 L54 6 L64 22 L74 10 L82 24 Q50 36 20 24 Z" fill="#e9ecee" />
    <path d="M36 24 L42 16 L46 26 Z" fill="#4a4a4a" /><path d="M54 26 L60 14 L66 24 Z" fill="#3d6da8" /><path d="M46 26 L52 20 L54 28 Z" fill="#5bbf80" />
  </svg>
)

const dockApps = [
  { icon: Finder, run: true },
  { icon: Safari, run: true },
  { icon: Launchpad },
  { icon: Mail, run: true, badge: '11' },
  { icon: FaceTime, badge: '9' },
  { icon: Messages },
  { icon: Maps },
  { icon: Photos },
  { icon: Contacts },
  { icon: Numbers },
  { icon: SequelPro },
  { icon: Terminal, run: true },
  { icon: VSCode, run: true },
  { icon: Calendar },
  { icon: Pages },
  { icon: Reminders },
  { icon: Notes },
  { icon: Music },
  { icon: Podcasts },
  { icon: AppleTv },
  { icon: AppStore },
  { icon: SysPrefs, badge: '1' },
  { icon: Spotify },
]
const dockExtras = [{ icon: Stickies }, { icon: Preview }, { icon: CloudKey, run: true }]
const dockStacks = [{ icon: Folder }, { icon: DocThumb }, { icon: DocThumb }, { icon: () => <DocThumb tall /> }, { icon: Trash }]

const DockItem = ({ icon: Icon, run, badge }) => (
  <Slot>
    <Icon />
    {run && <RunDot />}
    {badge && <Badge>{badge}</Badge>}
  </Slot>
)

const lessons = [
  { kind: 'Reading:', lines: ['A note about the', 'video lectures in this lesson'], meta: '3 min' },
  { kind: 'Video:', lines: ['Probability', 'Definitions and Notation'], meta: '7 min' },
  { kind: 'Video:', lines: ['Joint Probabilities'], meta: '6 min', pb: 17 },
  { kind: 'Practice Quiz:', lines: ['Practice quiz', 'on Probability Concepts'], meta: '9 questions', active: true },
]

export default function App() {
  return (
    <Desktop>
      <Global />
      <MenuBar>
        <AppleMark />
        <MenuItem $bold $ml={38}>Safari</MenuItem>
        <MenuItem $ml={39}>Archief</MenuItem>
        <MenuItem>Wijzig</MenuItem>
        <MenuItem>Weergave</MenuItem>
        <MenuItem>Geschiedenis</MenuItem>
        <MenuItem>Bladwijzers</MenuItem>
        <MenuItem>Ontwikkel</MenuItem>
        <MenuItem>Venster</MenuItem>
        <MenuItem>Help</MenuItem>
        <MenuSpacer />
        <TrayIcon width="42" height="30" viewBox="0 0 42 30">
          <g fill="none" stroke="#1c2b3c" strokeWidth="2.6">
            <path d="M2 10 C12 0 30 0 40 10" />
            <path d="M8 15 C15 8 27 8 34 15" />
            <path d="M14 20 C18 16 24 16 28 20" />
          </g>
          <path d="M21 30 L16 24 C19 22 23 22 26 24 Z" fill="#1c2b3c" />
        </TrayIcon>
        <MenuItem $ml={22}>62%</MenuItem>
        <TrayIcon $ml={8} width="47" height="24" viewBox="0 0 47 24">
          <rect x="1" y="1" width="40" height="22" rx="4" fill="none" stroke="#1c2b3c" strokeWidth="2" />
          <rect x="4" y="4" width="21" height="16" fill="#1c2b3c" />
          <path d="M44 8 C46 10 46 14 44 16" fill="none" stroke="#1c2b3c" strokeWidth="2" />
        </TrayIcon>
        <MenuItem $ml={34}>Ma 07:32</MenuItem>
        <TrayIcon $ml={33} width="32" height="28" viewBox="0 0 32 28">
          <rect x="0" y="0" width="32" height="28" rx="3" fill="#1c2b3c" />
          <path d="M3 4 H5 M8 4 H10 M13 4 H15" stroke="#d0e0ee" strokeWidth="2" />
          <rect x="2" y="7" width="28" height="19" fill="#d0e0ee" />
          <path d="M14 11 H24 V21 H14 Z M14 11 a2.5 2.5 0 1 0 -2.5 2.5 H26.5 a2.5 2.5 0 1 0 -2.5 -2.5 V21 a2.5 2.5 0 1 0 2.5 -2.5 H11.5 a2.5 2.5 0 1 0 2.5 2.5 Z" fill="none" stroke="#1c2b3c" strokeWidth="1.6" />
          <path d="M4 10 V24 M7.5 10 V24" stroke="#1c2b3c" strokeWidth="1.6" strokeDasharray="2 2" />
        </TrayIcon>
        <TrayIcon $ml={44} width="29" height="30" viewBox="0 0 29 30">
          <circle cx="12" cy="12" r="10" fill="none" stroke="#1c2b3c" strokeWidth="2.4" />
          <path d="M19 20 L27 29" stroke="#1c2b3c" strokeWidth="3" />
        </TrayIcon>
        <TrayIcon $ml={35} width="32" height="32" viewBox="0 0 32 32">
          <defs>
            <radialGradient id="siri"><stop offset="0" stopColor="#e8e8ff" /><stop offset=".35" stopColor="#5a78e8" /><stop offset=".7" stopColor="#a23bb8" /><stop offset="1" stopColor="#14203a" /></radialGradient>
          </defs>
          <circle cx="16" cy="16" r="16" fill="url(#siri)" />
          <path d="M6 12 L26 20 M26 10 L6 22 M16 5 V27" stroke="#dff4ff" strokeWidth="1.6" />
        </TrayIcon>
        <TrayIcon $ml={24} width="37" height="22" viewBox="0 0 37 22">
          <path d="M0 2 H5 M9 2 H37 M0 11 H5 M9 11 H37 M0 20 H5 M9 20 H37" stroke="#1c2b3c" strokeWidth="3.6" />
        </TrayIcon>
      </MenuBar>

      <Stage>
        <Window>
          <Toolbar>
            <Light $c="#fc5753" />
            <Light $c="#fdbc40" />
            <Light $c="#33c748" />
            <ToolButton $w={50} $ml={10}>
              <svg width="16" height="28" viewBox="0 0 16 28"><path d="M13 2 L3 14 L13 26" fill="none" stroke="#555" strokeWidth="2.6" /></svg>
            </ToolButton>
            <ToolButton $w={50} $ml={2}>
              <svg width="16" height="28" viewBox="0 0 16 28"><path d="M3 2 L13 14 L3 26" fill="none" stroke="#aaa" strokeWidth="2.6" /></svg>
            </ToolButton>
            <ToolButton $w={74} $ml={20}>
              <svg width="30" height="24" viewBox="0 0 30 24">
                <rect x="1" y="1" width="28" height="22" fill="none" stroke="#555" strokeWidth="2" />
                <rect x="1" y="1" width="8" height="22" fill="#e2e2e2" stroke="#555" strokeWidth="2" />
                <path d="M5 5 V19" stroke="#555" strokeWidth="2" strokeDasharray="2 3" />
              </svg>
            </ToolButton>
            <UrlField $w={1347} $ml={636}>
              <UrlText>
                <svg width="15" height="22" viewBox="0 0 15 22">
                  <path d="M3.5 10 V6 a4 4 0 0 1 8 0 V10" fill="none" stroke="#9a9a9a" strokeWidth="1.8" />
                  <rect x="0" y="10" width="15" height="12" rx="1" fill="#9a9a9a" />
                </svg>
                coursera.org
              </UrlText>
              <UrlEnd>
                <svg width="24" height="28" viewBox="0 0 24 28">
                  <path d="M17 8 A10 10 0 1 0 21 15" fill="none" stroke="#666" strokeWidth="1.7" />
                  <path d="M13 1 L21 7 L13 12 Z" fill="#666" />
                </svg>
              </UrlEnd>
            </UrlField>
            <ToolButton $w={74} $ml={809}>
              <svg width="24" height="32" viewBox="0 0 24 32">
                <path d="M7 11 H2 V31 H22 V11 H17" fill="none" stroke="#555" strokeWidth="2" />
                <path d="M12 22 V2 M7 7 L12 1 L17 7" fill="none" stroke="#555" strokeWidth="2" />
              </svg>
            </ToolButton>
            <ToolButton $w={73} $ml={16}>
              <svg width="26" height="26" viewBox="0 0 26 26">
                <path d="M9 1 H25 V18 H19" fill="none" stroke="#555" strokeWidth="2" />
                <rect x="1" y="8" width="17" height="17" rx="2" fill="#fbfbfb" stroke="#555" strokeWidth="2.4" />
              </svg>
            </ToolButton>
          </Toolbar>
          <TabBar>
            <Tab $w={831}>06 String Lists</Tab>
            <Tab $w={829} $active>Practice quiz on Probability Concepts | Coursera</Tab>
            <Tab $w={809}>Automate the Boring Stuff with Python</Tab>
            <Tab $w={806}>American English Idioms · Career Training USA · InterExchange</Tab>
            <NewTab>
              <svg width="24" height="24" viewBox="0 0 24 24"><path d="M12 1 V23 M1 12 H23" stroke="#555" strokeWidth="1.8" /></svg>
            </NewTab>
          </TabBar>
          <CrumbBar>
            <Crumbs>
              <CrumbLink>Data Science Math Skills</CrumbLink>
              <Chev />
              <CrumbLink>Week 4</CrumbLink>
              <Chev />
              <CrumbCurrent>Practice quiz on Probability Concepts</CrumbCurrent>
            </Crumbs>
            <Pager>
              Prev
              <PagerBar />
              Next
            </Pager>
          </CrumbBar>
          <CourseBody>
            <Sidebar>
              <WeekHeading>Basic Probability<br />Definitions</WeekHeading>
              <Lessons>
                {lessons.map(l => (
                  <Lesson key={l.meta} $active={l.active} $pb={l.pb}>
                    <LessonCheck><Check size={40} /></LessonCheck>
                    <LessonText>
                      <b>{l.kind}</b> {l.lines[0]}
                      {l.lines[1] && <><br />{l.lines[1]}</>}
                      <LessonMeta>{l.meta}</LessonMeta>
                    </LessonText>
                  </Lesson>
                ))}
              </Lessons>
              <WeekHeading $mt={12}>Problem Solving Methods</WeekHeading>
              <WeekHeading $mt={24}>Applying Bayes Theorem<br />and the Binomial Theorem</WeekHeading>
            </Sidebar>
            <Rail>
              <RailToggle>
                <svg width="34" height="32" viewBox="0 0 34 32">
                  <g fill="none" stroke="#333" strokeWidth="1.5">
                    <circle cx="4" cy="4" r="3.2" /><circle cx="4" cy="16" r="3.2" /><circle cx="4" cy="28" r="3.2" />
                    <path d="M12 3 H34 M12 16 H34 M12 29 H34" />
                  </g>
                </svg>
              </RailToggle>
            </Rail>
            <Main>
              <Header>
                <Eyebrow>PRACTICE QUIZ • 25 MIN</Eyebrow>
                <Title>Practice quiz on Probability Concepts</Title>
              </Header>
              <Steps>
                <Step>
                  <StepCheck><Check size={46} /></StepCheck>
                  <StepBody $h={111} $pt={6}>
                    <StepLabel>Submit your assignment</StepLabel>
                    <TryAgain>Try again</TryAgain>
                  </StepBody>
                </Step>
                <Step>
                  <StepCheck $pt={45}><Check size={46} /></StepCheck>
                  <StepBody $h={252} $pt={34}>
                    <div>
                      <StepLabel $mt={17}>Receive grade</StepLabel>
                      <PassLine><b>TO PASS</b>75% or higher</PassLine>
                    </div>
                    <GradePanel>
                      <div>
                        <StepLabel $mt={17}>Grade</StepLabel>
                        <GradeValue>100%</GradeValue>
                      </div>
                      <GradeAction>
                        <FeedbackButton>View Feedback</FeedbackButton>
                        <KeepNote>We keep your highest score</KeepNote>
                      </GradeAction>
                    </GradePanel>
                  </StepBody>
                </Step>
                <Reactions>
                  <svg width="38" height="40" viewBox="0 0 38 40">
                    <path d="M1 21 C6 15 13 10 17 1 C21 1 23 5 22 9 L20 16 H30 C35 17 37 21 37 27 C37 33 34 39 30 39 H10 C5 39 2 35 2 31 Z" fill="none" stroke="#333" strokeWidth="1.5" />
                  </svg>
                  <svg width="38" height="40" viewBox="0 0 38 40">
                    <path d="M1 21 L5 5 C8 2 12 1 20 1 H28 C34 2 37 7 37 13 C37 20 33 25 27 25 H20 C22 29 23 34 21 38 C19 40 17 39 16 37 Z" fill="none" stroke="#333" strokeWidth="1.5" />
                  </svg>
                  <svg width="28" height="40" viewBox="0 0 28 40">
                    <path d="M1 40 V1 H27 V23 H1" fill="none" stroke="#333" strokeWidth="1.5" />
                  </svg>
                </Reactions>
              </Steps>
            </Main>
          </CourseBody>
          <ShadowStrip />
          <StatusBar>
            <svg width="58" height="59" viewBox="0 0 16 16" shapeRendering="crispEdges">
              <rect width="16" height="16" rx="1" fill="#0b0b0b" />
              <path d="M5 0 H14 V9 H11 V5 H7 V3 H5 Z" fill="#c9c92a" />
              <path d="M2 6 H8 V8 H5 V12 H3 V10 H1 V7 H2 Z" fill="#1a63c8" />
              <path d="M9 9 H15 V11 H13 V14 H7 V12 H9 Z" fill="#2fbf3a" />
            </svg>
            <StatusTitle>Practice Python</StatusTitle>
          </StatusBar>
        </Window>
        <BackStrip>
          <BackBlock $h={44} $c="#15161b" />
          <BackBlock $h={415} $c="#2e3140" />
          <BackBlock $h={95} $c="#373a4e" />
          <BackBlock $h={20} $c="#2e3140" />
          <BackBlock $h={999} $c="linear-gradient(#dedede, #e9e9e9)" />
          <BackBlock $h={293} $c="#2e3140" />
          <BackBlock $c="#1a1b20" $r="0 0 10px 0" />
          <Ghost $top={58} width="20" height="40" viewBox="0 0 20 40"><path d="M0 0 L10 10 V30" fill="none" stroke="#4c5f8f" strokeWidth="3" /></Ghost>
          <Ghost $top={200} width="14" height="50" viewBox="0 0 14 50"><path d="M0 2 C12 8 14 36 0 46" fill="none" stroke="#4c5f8f" strokeWidth="3" /></Ghost>
          <Ghost $top={286} width="14" height="20" viewBox="0 0 14 20"><path d="M0 2 C8 2 12 14 0 18" fill="none" stroke="#4c5f8f" strokeWidth="3" /></Ghost>
          <Ghost $top={384} width="16" height="30" viewBox="0 0 16 30"><path d="M0 2 L14 15 L0 28" fill="none" stroke="#4c5f8f" strokeWidth="3" /></Ghost>
          <Ghost $top={531} width="16" height="34" viewBox="0 0 16 34"><path d="M0 2 H14 V18 H0 M0 22 H6 V32 H0" fill="none" stroke="#d9d9d9" strokeWidth="3" /></Ghost>
          <Ghost $top={1782} width="16" height="26" viewBox="0 0 16 26"><path d="M0 2 H12 L2 14 L14 24" fill="none" stroke="#4c5f8f" strokeWidth="4" /></Ghost>
          <Pin $top={94}>2</Pin>
          <Pin $top={301}>K</Pin>
          <Pin $top={1815}>1</Pin>
        </BackStrip>
      </Stage>

      <Dock>
        {dockApps.map((a, i) => <DockItem key={i} {...a} />)}
        <DockRule />
        {dockExtras.map((a, i) => <DockItem key={i} {...a} />)}
        <DockRule />
        {dockStacks.map((a, i) => <DockItem key={i} {...a} />)}
      </Dock>
    </Desktop>
  )
}
